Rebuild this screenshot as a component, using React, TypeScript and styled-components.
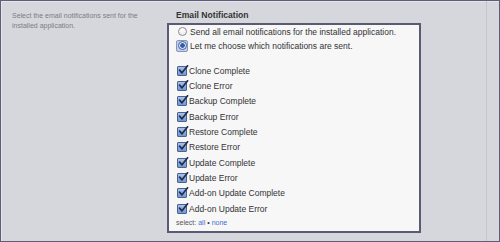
import React, { useState } from 'react'
import styled, { createGlobalStyle } from 'styled-components'

const GlobalStyle = createGlobalStyle`
    html, body {
        margin: 0;
        padding: 0;
        background: #d6d7dd;
    }
    * {
        box-sizing: border-box;
    }
`

const events = [
    'Clone Complete',
    'Clone Error',
    'Backup Complete',
    'Backup Error',
    'Restore Complete',
    'Restore Error',
    'Update Complete',
    'Update Error',
    'Add-on Update Complete',
    'Add-on Update Error',
]

function App(): JSX.Element {
    const [mode, setMode] = useState<'all' | 'choose'>('choose')
    const [checked, setChecked] = useState<boolean[]>(events.map(() => true))

    const toggle = (i: number) => {
        setChecked(checked.map((c, j) => (j === i ? !c : c)))
    }

    return (
        <>
            <GlobalStyle />
            <Page>
                <Description>Select the email notifications sent for the installed application.</Description>
                <Field>
                    <Title>Email Notification</Title>
                    <Box>
                        <RadioGroup>
                            <RadioRow onClick={() => setMode('all')}>
                                <RadioFocus $focused={false}>
                                    <Radio $on={mode === 'all'} />
                                </RadioFocus>
                                Send all email notifications for the installed application.
                            </RadioRow>
                            <RadioRow onClick={() => setMode('choose')}>
                                <RadioFocus $focused={mode === 'choose'}>
                                    <Radio $on={mode === 'choose'} />
                                </RadioFocus>
                                Let me choose which notifications are sent.
                            </RadioRow>
                        </RadioGroup>
                        <CheckList>
                            {events.map((label, i) => (
                                <CheckRow key={label} onClick={() => toggle(i)}>
                                    <CheckBox $on={checked[i]}>
                                        {checked[i] ? (
                                            <svg width="11" height="10" viewBox="0 0 11 10">
                                                <path
                                                    d="M1.6 5.2 L4 7.8 L9.6 0.8"
                                                    fill="none"
                                                    stroke="#1f2c4f"
                                                    strokeWidth="1.7"
                                                    strokeLinecap="round"
                                                    strokeLinejoin="round"
                                                />
                                            </svg>
                                        ) : null}
                                    </CheckBox>
                                    {label}
                                </CheckRow>
                            ))}
                        </CheckList>
                        <SelectLine>
                            select: <SelectLink onClick={() => setChecked(events.map(() => true))}>all</SelectLink>
                            <Bullet>•</Bullet>
                            <SelectLink onClick={() => setChecked(events.map(() => false))}>none</SelectLink>
                        </SelectLine>
                    </Box>
                </Field>
                <Gutter />
                <div />
            </Page>
        </>
    )
}

const Page = styled.div`
    width: 500px;
    height: 242px;
    display: grid;
    grid-template-columns: 166px 254px 1fr 12px;
    background: #d6d7dd;
    border: 1px solid #5f5d79;
    box-shadow: inset 1px 1px 0 #e4e5ea;
    font-family: 'Liberation Sans', Arial, sans-serif;
`

const Description = styled.div`
    padding: 10px 0 0 11px;
    width: 150px;
    font-size: 7px;
    line-height: 10px;
    color: #7b7c84;
`

const Field = styled.div`
    display: flex;
    flex-direction: column;
    padding-top: 8px;
`

const Title = styled.div`
    height: 14px;
    padding-left: 9px;
    font-size: 8.6px;
    font-weight: bold;
    line-height: 12px;
    color: #333;
`

const Box = styled.div`
    height: 210px;
    display: flex;
    flex-direction: column;
    background: #f7f7f8;
    border: 2px solid #5b5a73;
`

const RadioGroup = styled.div`
    display: flex;
    flex-direction: column;
    gap: 1px;
`

const RadioRow = styled.label`
    height: 13px;
    display: flex;
    align-items: center;
    gap: 2px;
    padding-left: 7px;
    font-size: 8.5px;
    color: #333;
    cursor: pointer;
`

const RadioFocus = styled.span<{ $focused: boolean }>`
    width: 12px;
    height: 12px;
    display: flex;
    align-items: center;
    justify-content: center;
    border-radius: 2px;
    border: 1px solid ${(p) => (p.$focused ? '#8295c4' : 'transparent')};
    background: ${(p) => (p.$focused ? '#c3cfe9' : 'transparent')};
`

const Radio = styled.span<{ $on: boolean }>`
    width: 9px;
    height: 9px;
    border-radius: 50%;
    border: 1px solid ${(p) => (p.$on ? '#4d6593' : '#8a8a90')};
    background: ${(p) =>
        p.$on ? 'radial-gradient(circle, #2f5fae 0 2px, #dfe6f4 2.6px)' : 'linear-gradient(#ffffff, #ececef)'};
`

const CheckList = styled.div`
    display: flex;
    flex-direction: column;
    margin-top: 11px;
`

const CheckRow = styled.label`
    height: 15.33px;
    display: flex;
    align-items: center;
    gap: 2px;
    padding-left: 8px;
    font-size: 8.5px;
    color: #333;
    cursor: pointer;
`

const CheckBox = styled.span<{ $on: boolean }>`
    position: relative;
    width: 10px;
    height: 10px;
    border-radius: 1px;
    border: 1px solid #4b628f;
    background: ${(p) => (p.$on ? 'linear-gradient(#a7c1ea, #7197d2)' : '#fff')};
    svg {
        position: absolute;
        left: 0;
        top: -2px;
    }
`

const SelectLine = styled.div`
    margin-top: 2px;
    padding-left: 7px;
    font-size: 7px;
    line-height: 10px;
    color: #555;
`

const SelectLink = styled.a`
    color: #3c6fd2;
    cursor: pointer;
`

const Bullet = styled.span`
    margin: 0 2px;
    color: #333;
`

const Gutter = styled.div`
    border-right: 1px solid #c5c6cd;
`

export default App
